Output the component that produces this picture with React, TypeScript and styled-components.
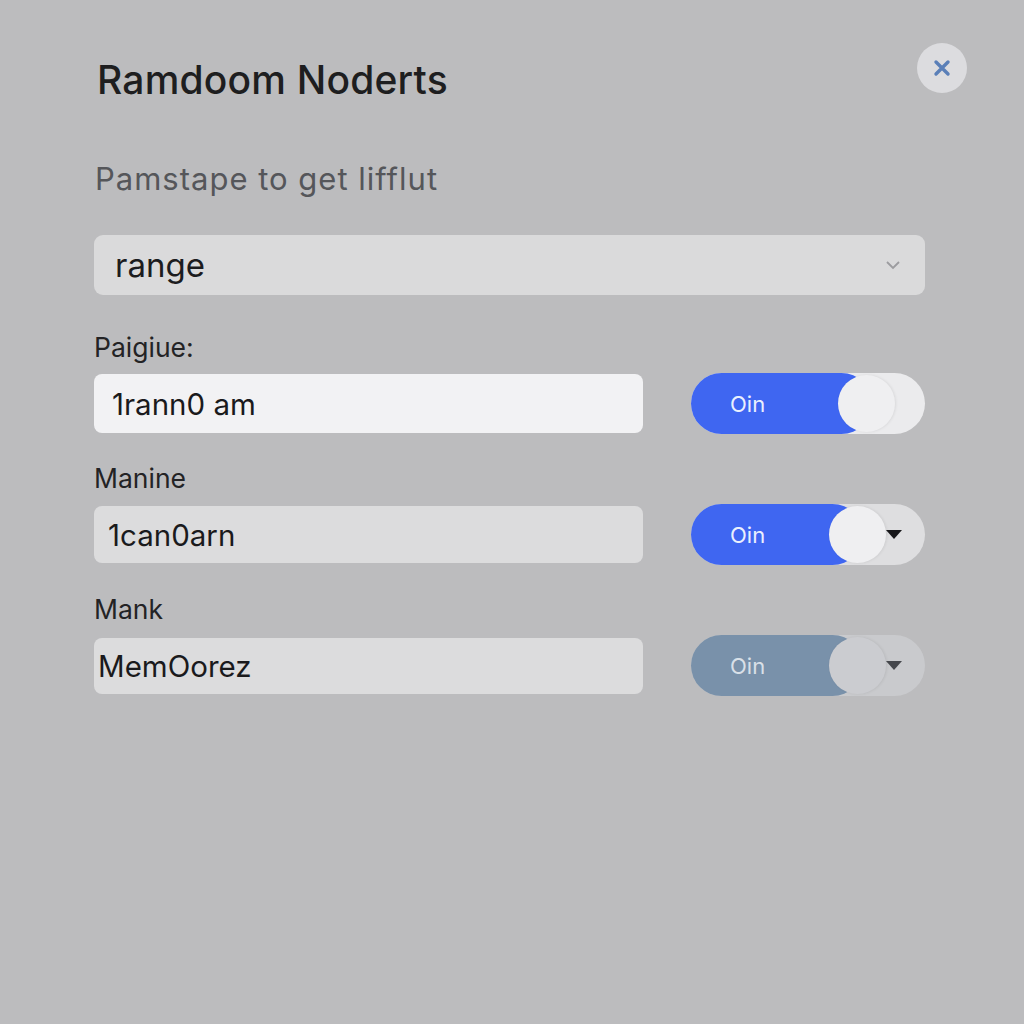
import * as React from 'react';
import styled, {createGlobalStyle} from "styled-components";

const GlobalStyle = createGlobalStyle`
  html, body {
    margin: 0;
    padding: 0;
    background: #bcbcbe;
  }
  body {
    font-family: Inter, "Noto Sans", "Liberation Sans", sans-serif;
    color: #1c1c1e;
  }
`

type FieldRow = {
	label: string
	value: string
	inputBg: string
	inset: number
	boxHeight: number
	tone: 'bright' | 'muted'
	caret: boolean
	rightBg: string
}

const rows: FieldRow[] = [
	{label: 'Paigiue:', value: '1rann0 am', inputBg: '#f2f2f4', inset: 18, boxHeight: 59, tone: 'bright', caret: false, rightBg: '#ebebed'},
	{label: 'Manine', value: '1can0arn', inputBg: '#dcdcdd', inset: 14, boxHeight: 57, tone: 'bright', caret: true, rightBg: '#dedee0'},
	{label: 'Mank', value: 'MemOorez', inputBg: '#dcdcdd', inset: 4, boxHeight: 56, tone: 'muted', caret: true, rightBg: '#c9cacd'},
]

export default function App() {
	return (
		<>
			<GlobalStyle/>
			<Page>
				<Header>
					<Title>Ramdoom Noderts</Title>
					<CloseButton aria-label="close">
						<svg width="18" height="18" viewBox="0 0 18 18">
							<path d="M3 3 L15 15 M15 3 L3 15" stroke="#5a7fb8" strokeWidth="3.4" strokeLinecap="round"/>
						</svg>
					</CloseButton>
				</Header>
				<Subtitle>Pamstape to get lifflut</Subtitle>
				<Form>
					<Select>
						<span>range</span>
						<svg width="16" height="10" viewBox="0 0 16 10">
							<path d="M2 2 L8 8 L14 2" stroke="#9c9c9f" strokeWidth="1.8" fill="none"/>
						</svg>
					</Select>
					{rows.map(row => (
						<Row key={row.label}>
							<Label>{row.label}</Label>
							<Controls>
								<TextBox bg={row.inputBg} inset={row.inset} boxHeight={row.boxHeight}>{row.value}</TextBox>
								<Toggle rightBg={row.rightBg}>
									<Fill tone={row.tone}>Oin</Fill>
									<Knob tone={row.tone}/>
									{row.caret && <Caret tone={row.tone}/>}
								</Toggle>
							</Controls>
						</Row>
					))}
				</Form>
			</Page>
		</>
	)
}

const Page = styled.div`
  padding: 43px 57px 0 94px;
  min-height: 1024px;
  box-sizing: border-box;
`

const Header = styled.div`
  display: flex;
  justify-content: space-between;
  align-items: flex-start;
`

const Title = styled.h1`
  margin: 14px 0 0 3px;
  font-size: 39px;
  line-height: 46px;
  font-weight: 500;
  color: #1e1e20;
  letter-spacing: 0.2px;
`

const CloseButton = styled.button`
  width: 50px;
  height: 50px;
  border-radius: 50%;
  border: none;
  background: #dcdcdf;
  display: flex;
  align-items: center;
  justify-content: center;
  padding: 0;
`

const Subtitle = styled.p`
  margin: 59px 0 0 1px;
  font-size: 31px;
  line-height: 34px;
  letter-spacing: 1px;
  color: #55565a;
`

const Form = styled.div`
  width: 831px;
  margin-top: 39px;
  display: flex;
  flex-direction: column;
  gap: 30px;
`

const Select = styled.div`
  height: 60px;
  border-radius: 9px;
  background: #dadadb;
  display: flex;
  align-items: center;
  justify-content: space-between;
  padding: 0 24px 0 21px;
  font-size: 33px;
  color: #1c1c1e;
  margin-bottom: 8px;
`

const Row = styled.div`
  display: flex;
  flex-direction: column;
  gap: 12px;
`

const Label = styled.div`
  font-size: 26.5px;
  line-height: 28px;
  color: #232325;
`

const Controls = styled.div`
  display: grid;
  grid-template-columns: 549px 234px;
  column-gap: 48px;
  align-items: center;
`

const TextBox = styled.div<{ bg: string; inset: number; boxHeight: number }>`
  height: ${p => p.boxHeight}px;
  border-radius: 8px;
  background: ${p => p.bg};
  display: flex;
  align-items: center;
  padding-left: ${p => p.inset}px;
  font-size: 29.5px;
  color: #1a1a1c;
`

const Toggle = styled.div<{ rightBg: string }>`
  height: 61px;
  border-radius: 31px;
  background: ${p => p.rightBg};
  display: flex;
  align-items: center;
`

const Fill = styled.div<{ tone: 'bright' | 'muted' }>`
  width: 181px;
  height: 100%;
  box-sizing: border-box;
  border-radius: 31px;
  background: ${p => p.tone === 'bright' ? '#3f66f1' : '#7991aa'};
  color: ${p => p.tone === 'bright' ? '#eaf0fe' : '#d9e0e8'};
  display: flex;
  align-items: center;
  padding-left: 39px;
  font-size: 22px;
`

const Knob = styled.div<{ tone: 'bright' | 'muted' }>`
  width: 57px;
  height: 57px;
  border-radius: 50%;
  margin-left: -34px;
  flex-shrink: 0;
  background: ${p => p.tone === 'bright' ? '#efeff1' : '#cbccd0'};
  box-shadow: 1px 0 3px rgba(0, 0, 0, 0.08);
`

const Caret = styled.div<{ tone: 'bright' | 'muted' }>`
  width: 0;
  height: 0;
  margin-left: auto;
  margin-right: 23px;
  border-left: 8px solid transparent;
  border-right: 8px solid transparent;
  border-top: 9px solid ${p => p.tone === 'bright' ? '#17171a' : '#45474c'};
`
